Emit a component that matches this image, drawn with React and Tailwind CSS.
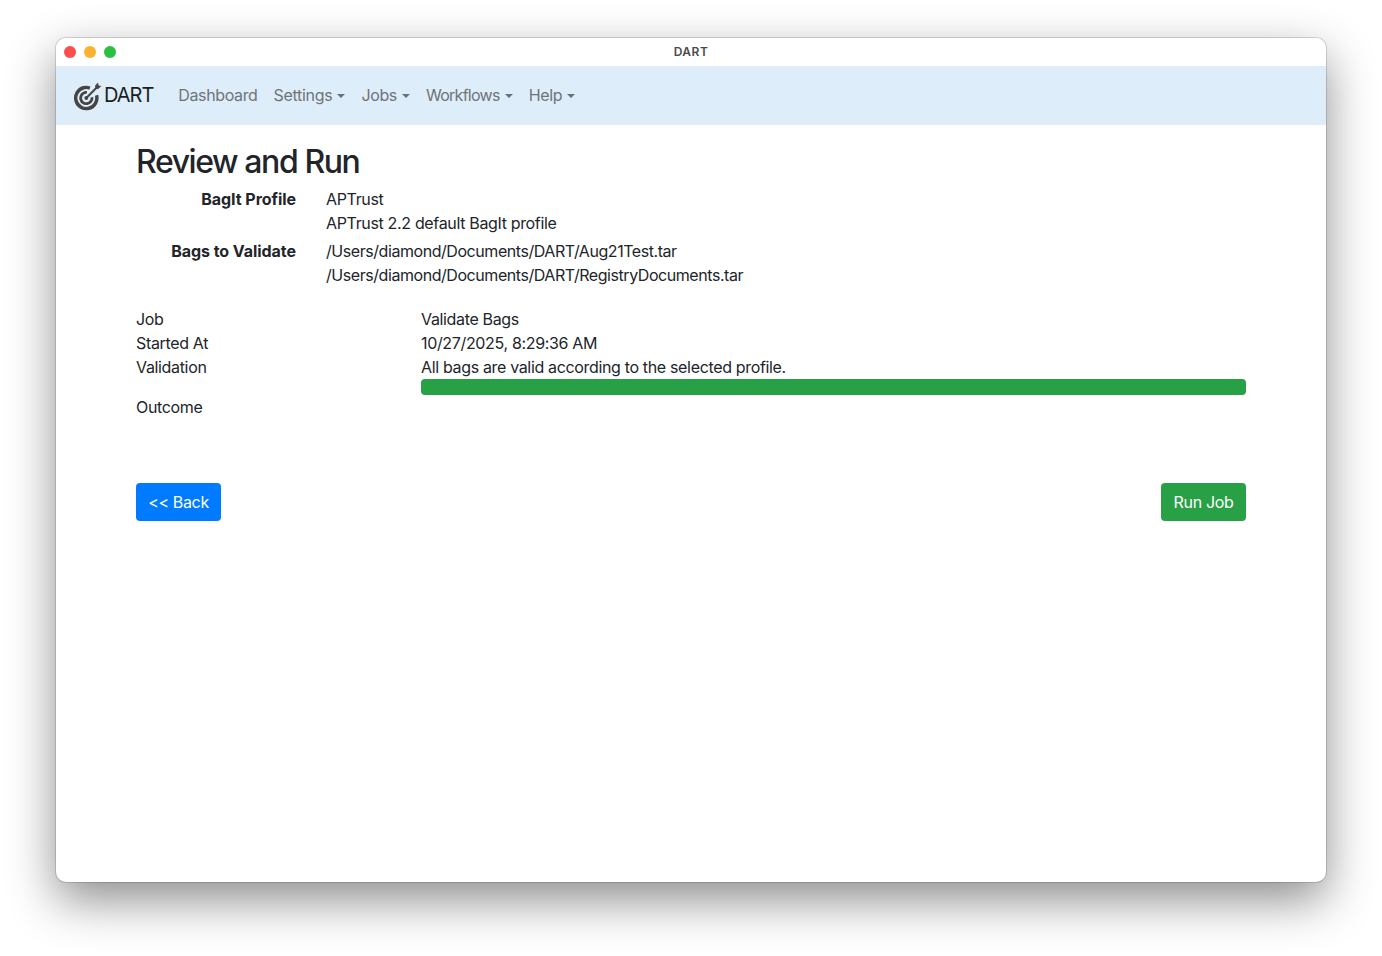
import React from "react";

const Caret = () => <span className="ml-[5px] inline-block h-0 w-0 border-x-[4px] border-t-[4px] border-x-transparent border-t-[#6b7074] align-[3px]" />;

const NavItem = ({ label, caret, className = "tracking-[-0.38px]" }) => (
  <span className={`px-2 -translate-y-[1px] text-[#6f7478] whitespace-nowrap ${className}`}>
    {label}
    {caret && <Caret />}
  </span>
);

const Logo = () => (
  <svg width="30" height="30" viewBox="0 0 30 30" fill="none" className="shrink-0">
    <circle cx="14.3" cy="17" r="10.6" pathLength="360" stroke="#454545" strokeWidth="3.4" strokeDasharray="305 55" transform="rotate(-15 14.3 17)" />
    <circle cx="14.3" cy="17" r="5.7" pathLength="360" stroke="#454545" strokeWidth="2.8" strokeDasharray="285 75" transform="rotate(-8 14.3 17)" />
    <circle cx="14.3" cy="17" r="1.9" fill="#454545" />
    <path d="M14.3 17 L25 6.3" stroke="#454545" strokeWidth="2" strokeLinecap="round" />
    <path d="M23 4.8 L26 1.6 L26.6 4.4 L29.4 5 L26.2 8 L23.6 7.4 Z" fill="#454545" />
  </svg>
);

const InfoRow = ({ label, lines, className = "" }) => (
  <div className="flex gap-[30px]">
    <div className="w-[160px] text-right font-bold tracking-[-0.05px]">{label}</div>
    <div className={className}>
      {lines.map((l) => (
        <div key={l}>{l}</div>
      ))}
    </div>
  </div>
);

const JobRow = ({ label, children }) => (
  <div className="flex">
    <div className="w-[285px] shrink-0">{label}</div>
    <div className="flex-1">{children}</div>
  </div>
);

export default function App() {
  return (
    <div className="h-[956px] w-[1382px] overflow-hidden bg-white pt-[38px] pl-[56px] text-[16px] leading-[24px] tracking-[-0.34px] text-[#212529] font-['Inter','Liberation_Sans',sans-serif]">
      <div className="flex h-[844px] w-[1270px] flex-col overflow-hidden rounded-[10px] bg-white shadow-[0_0_0_1px_rgba(0,0,0,0.14),0_18px_48px_rgba(0,0,0,0.45)]">
        <div className="relative flex h-[28px] shrink-0 items-center justify-center bg-white">
          <div className="absolute left-[8px] top-[8px] flex gap-[8px]">
            <span className="h-[12px] w-[12px] rounded-full bg-[#fc4f4d]" />
            <span className="h-[12px] w-[12px] rounded-full bg-[#fdb12f]" />
            <span className="h-[12px] w-[12px] rounded-full bg-[#2ac03f]" />
          </div>
          <span className="text-[12px] font-semibold leading-[16px] tracking-[0.5px] text-[#4a4a4a]">DART</span>
        </div>
        <nav className="flex h-[59px] shrink-0 items-center bg-[#deedfa] pl-[16px]">
          <Logo />
          <span className="ml-[2px] mr-[17px] -translate-y-[1px] text-[20px] tracking-[-1px] text-[#1c1f22]">DART</span>
          <NavItem label="Dashboard" />
          <NavItem label="Settings" caret className="tracking-[-0.28px]" />
          <NavItem label="Jobs" caret />
          <NavItem label="Workflows" caret className="tracking-[-0.72px]" />
          <NavItem label="Help" caret />
        </nav>
        <main className="flex-1 px-[80px] pt-[17px]">
          <h1 className="mb-[5px] text-[32px] font-medium leading-[40px] tracking-[-1.42px]">Review and Run</h1>
          <div className="flex flex-col gap-[4px]">
            <InfoRow label="BagIt Profile" lines={["APTrust", "APTrust 2.2 default BagIt profile"]} />
            <InfoRow
              label="Bags to Validate"
              className="tracking-[-0.44px]"
              lines={["/Users/diamond/Documents/DART/Aug21Test.tar", "/Users/diamond/Documents/DART/RegistryDocuments.tar"]}
            />
          </div>
          <div className="mt-[20px]">
            <JobRow label="Job">Validate Bags</JobRow>
            <JobRow label="Started At">10/27/2025, 8:29:36 AM</JobRow>
            <JobRow label="Validation">
              All bags are valid according to the selected profile.
              <div className="h-[16px] rounded-[4px] bg-[#28a045]" />
            </JobRow>
            <JobRow label="Outcome" />
          </div>
          <div className="mt-[64px] flex justify-between">
            <button className="h-[38px] w-[85px] rounded-[4px] bg-[#007bff] text-white">&lt;&lt; Back</button>
            <button className="h-[38px] w-[85px] rounded-[4px] bg-[#28a045] text-white">Run Job</button>
          </div>
        </main>
      </div>
    </div>
  );
}
